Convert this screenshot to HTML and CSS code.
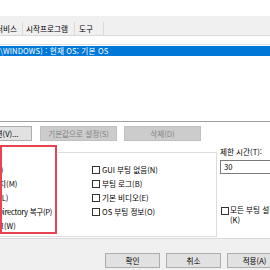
FILE: index.html
```html
<!DOCTYPE html>
<html lang="ko">
<head>
<meta charset="utf-8">
<link rel="stylesheet" href="styles.css">
</head>
<body>
<div class="page">
  <div class="topgap"></div>
  <div class="tabbar">
    <div class="tab tab-cut"><span>서비스</span></div>
    <div class="tab t2">시작프로그램</div>
    <div class="tab t3">도구</div>
  </div>
  <div class="tabpage">
    <div class="list">
      <div class="sel">\WINDOWS) : 현재 OS; 기본 OS</div>
    </div>
    <div class="btnrow">
      <div class="btn adv">고급 옵션(V)...</div>
      <div class="btn dis b2">기본값으로 설정(S)</div>
      <div class="btn dis b3">삭제(D)</div>
    </div>
    <div class="options">
      <div class="group">
        <div class="gcols">
          <div class="gleft">
            <div class="row">안전 부팅(F)</div>
            <div class="row rad">최소 설치(M)</div>
            <div class="row rad">대체 셸(L)</div>
            <div class="row rad ad">Active Directory 복구(P)</div>
            <div class="row rad">네트워크(W)</div>
          </div>
          <div class="gmid">
            <div class="row"><span class="cb"></span>GUI 부팅 없음(N)</div>
            <div class="row"><span class="cb"></span>부팅 로그(B)</div>
            <div class="row"><span class="cb"></span>기본 비디오(E)</div>
            <div class="row"><span class="cb"></span>OS 부팅 정보(O)</div>
          </div>
        </div>
      </div>
      <div class="rightcol">
        <div class="lbl">제한 시간(T):</div>
        <div class="input">30</div>
        <div class="perm"><span class="cb"></span><div class="ptext">모든 부팅 설정을 영구적으로 설정<br>(K)</div></div>
      </div>
      <div class="mark"></div>
    </div>
  </div>
  <div class="footer">
    <div class="btn fbtn">확인</div>
    <div class="btn fbtn">취소</div>
    <div class="btn fbtn">적용(A)</div>
  </div>
</div>
</body>
</html>
```
FILE: styles.css
```css
* { box-sizing: border-box; margin: 0; padding: 0; }
body {
  margin: 0;
  width: 270px;
  height: 270px;
  overflow: hidden;
  background: #fff;
  font-family: "Noto Sans CJK KR", "Noto Sans", sans-serif;
  font-size: 7.6px;
  line-height: 10px;
  color: #000;
}
.page { width: 270px; height: 270px; overflow: hidden; }
.topgap { height: 16px; background: #fff; }
.tabbar {
  height: 20px;
  background: #f0f0f0;
  border-bottom: 1px solid #d9d9d9;
  display: flex;
  align-items: flex-end;
}
.tab {
  height: 13px;
  line-height: 14px;
  border-right: 1px solid #d9d9d9;
  white-space: nowrap;
  overflow: hidden;
  flex: none;
}
.tab-cut { width: 23px; display: flex; justify-content: flex-end; padding-right: 5px; }
.t2 { width: 52px; padding-left: 3px; }
.t3 { width: 29px; padding-left: 4px; }

.tabpage {
  height: 203px;
  padding-top: 8px;
  background: #fff;
  border-bottom: 1px solid #d9d9d9;
}
.list {
  margin: 0 -10px;
  height: 78px;
  border-top: 1px solid #e0e0e0;
  border-bottom: 1px solid #a0a0a0;
  padding-top: 1px;
}
.sel {
  height: 10px;
  line-height: 10px;
  background: #0078d7;
  color: #fff;
  padding-left: 10px;
  letter-spacing: 0.15px;
  white-space: nowrap;
}
.btnrow { display: flex; margin-top: 4px; height: 15px; }
.btn {
  height: 15px;
  border: 1px solid #adadad;
  background: #e1e1e1;
  display: flex;
  align-items: center;
  justify-content: center;
  white-space: nowrap;
  line-height: 13px;
  flex: none;
}
.adv { width: 73px; margin-left: -41px; }
.dis { background: #cccccc; border-color: #bfbfbf; color: #838383; width: 77px; }
.b2 { margin-left: 8px; }
.b3 { margin-left: 7px; }

.options { display: flex; height: 97px; position: relative; }
.group {
  margin-top: 11px;
  margin-left: -60px;
  width: 277px;
  height: 85px;
  border: 1px solid #dcdcdc;
  border-top: none;
  flex: none;
}
.group::before {
  content: "";
  display: block;
  height: 1px;
  margin-left: 117px;
  background: #dcdcdc;
}
.gcols { display: flex; padding-top: 10px; }
.gleft { width: 151px; padding-left: 23px; flex: none; }
.row { height: 14px; line-height: 14px; white-space: nowrap; display: flex; align-items: center; }
.rad { padding-left: 12px; }
.ad { letter-spacing: -0.28px; }
.cb {
  width: 8px;
  height: 8px;
  border: 1px solid #333;
  background: #fff;
  margin-right: 2px;
  flex: none;
}
.rightcol { margin-left: 3px; flex: none; width: 60px; }
.lbl { margin-top: 6px; height: 10px; white-space: nowrap; }
.input {
  margin-top: 3px;
  height: 14px;
  width: 60px;
  border: 1px solid #7a7a7a;
  line-height: 12px;
  padding-left: 3px;
}
.perm { margin-top: 31px; display: flex; align-items: flex-start; padding-left: 1px; }
.perm .cb { margin-top: 2px; margin-right: 1px; }
.ptext { white-space: nowrap; line-height: 10px; }
.mark {
  position: absolute;
  left: 0;
  top: 4px;
  width: 57px;
  height: 89px;
  border: 2px solid #e9434f;
}
.footer {
  height: 31px;
  background: #f0f0f0;
  display: flex;
  gap: 6px;
  padding: 14px 0 0 105px;
}
.fbtn { width: 55px; }
```
